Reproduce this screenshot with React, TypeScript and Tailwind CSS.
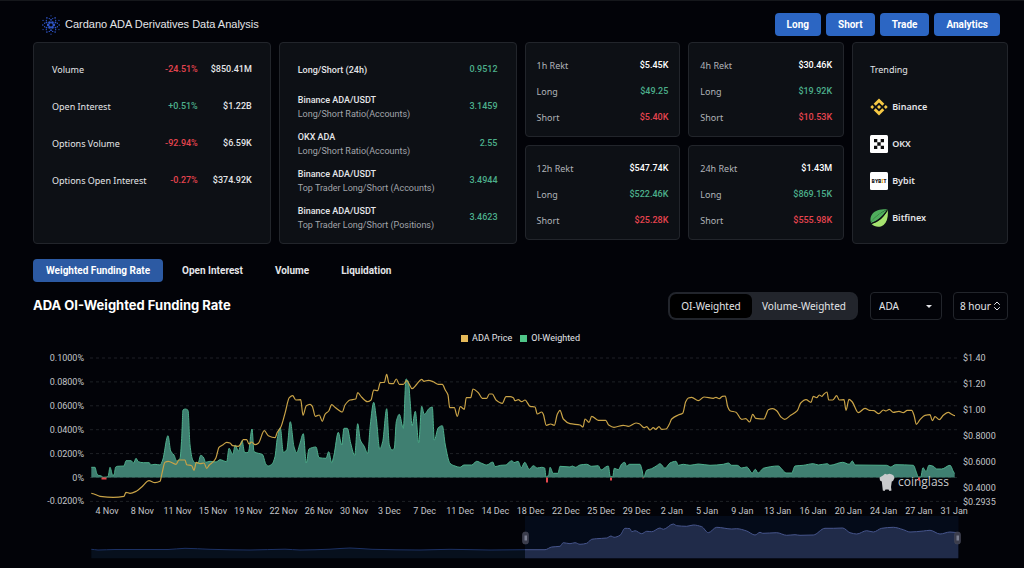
import { ChevronsUpDown } from 'lucide-react';

type Point = [number, number];

const links = ['Long', 'Short', 'Trade', 'Analytics'];

const volumes = [
  { label: 'Volume', change: '-24.51%', value: '$850.41M' },
  { label: 'Open Interest', change: '+0.51%', value: '$1.22B' },
  { label: 'Options Volume', change: '-92.94%', value: '$6.59K' },
  { label: 'Options Open Interest', change: '-0.27%', value: '$374.92K' }
];

const ratios = [
  { label: 'Long/Short (24h)', note: '', value: '0.9512' },
  { label: 'Binance ADA/USDT', note: 'Long/Short Ratio(Accounts)', value: '3.1459' },
  { label: 'OKX ADA', note: 'Long/Short Ratio(Accounts)', value: '2.55' },
  { label: 'Binance ADA/USDT', note: 'Top Trader Long/Short (Accounts)', value: '3.4944' },
  { label: 'Binance ADA/USDT', note: 'Top Trader Long/Short (Positions)', value: '3.4623' }
];

const rekts = [
  { label: '1h Rekt', total: '$5.45K', long: '$49.25', short: '$5.40K' },
  { label: '4h Rekt', total: '$30.46K', long: '$19.92K', short: '$10.53K' },
  { label: '12h Rekt', total: '$547.74K', long: '$522.46K', short: '$25.28K' },
  { label: '24h Rekt', total: '$1.43M', long: '$869.15K', short: '$555.98K' }
];

const tabs = ['Weighted Funding Rate', 'Open Interest', 'Volume', 'Liquidation'];

const rateTicks = ['0.1000%', '0.0800%', '0.0600%', '0.0400%', '0.0200%', '0%', '-0.0200%'];

const priceTicks = [
  { label: '$1.40', y: 358 },
  { label: '$1.20', y: 384 },
  { label: '$1.00', y: 410 },
  { label: '$0.8000', y: 436 },
  { label: '$0.6000', y: 462 },
  { label: '$0.4000', y: 488 },
  { label: '$0.2935', y: 502 }
];

const dateTicks = [
  '4 Nov', '8 Nov', '11 Nov', '15 Nov', '19 Nov', '22 Nov', '26 Nov', '30 Nov',
  '3 Dec', '7 Dec', '11 Dec', '14 Dec', '18 Dec', '22 Dec', '25 Dec', '29 Dec',
  '2 Jan', '5 Jan', '9 Jan', '13 Jan', '16 Jan', '20 Jan', '24 Jan', '27 Jan', '31 Jan'
];

const funding: Point[] = [
  [91.3, 467.3], [95, 467.3], [96.7, 473.3], [98.3, 475.3], [101.3, 476], [103, 477.3], [107, 477], [108.3, 475.7],
  [110, 467.3], [112.7, 475.3], [114, 475], [115.7, 467], [117.3, 466.3], [124, 466], [126, 460.7], [131, 460.7],
  [133.7, 463], [136, 458.3], [138.3, 461.7], [143.3, 462.7], [149.3, 462.7], [150.7, 465], [155, 464.3], [160, 465],
  [162.7, 460], [168, 435.7], [170.7, 451], [174, 455], [176.7, 461], [180, 458.3], [181.7, 438.3], [183, 410],
  [185.3, 409], [188, 410.3], [190, 445], [192.7, 460], [195, 462.7], [198, 463.3], [200.7, 455.3], [203.3, 457],
  [205.7, 462.3], [210, 461.3], [216, 462], [220, 459.7], [226.7, 461.7], [229, 448.3], [232.7, 454.3], [235.3, 445],
  [238.3, 451], [242, 440.7], [244.7, 452.7], [248.3, 452.3], [252, 429], [254, 451.7], [258.3, 453.3], [262.3, 454.3],
  [266, 464.3], [268.3, 466], [272.3, 463.7], [275, 456.7], [277.3, 438.3], [280.3, 427.7], [283.3, 452.3], [286.7, 450],
  [290.3, 421.7], [294, 446.7], [296.7, 452.7], [300, 443.3], [303.3, 433.7], [306.3, 463], [309, 449], [316, 447],
  [319, 457.7], [326, 458.3], [328.7, 451.7], [331.7, 462.7], [334, 455], [338.3, 432.3], [341.7, 445], [344, 428.3],
  [347.3, 428.3], [350.7, 443.3], [354.7, 455.3], [357.7, 423.7], [360.3, 440], [364, 446], [367.7, 453.3], [370.3, 425],
  [373.7, 402.3], [376.3, 418.3], [379.7, 449], [382.7, 441.7], [386.7, 408.7], [389.3, 445], [392, 450], [394.3, 448.3],
  [396.3, 421.7], [399.3, 414.3], [403.3, 428.3], [406, 379], [408.3, 381.7], [410.3, 403.3], [412, 426], [415.3, 411.3],
  [418.7, 442.7], [421.7, 406.3], [424.3, 414.3], [429.3, 408.3], [432.3, 407], [434.3, 440], [438.3, 427.7], [442.3, 425.7],
  [445.3, 445], [450, 463.3], [455, 466], [460, 467.3], [464, 465], [471.7, 465], [476.7, 461.3], [481.7, 463.3],
  [486.7, 465], [492.7, 462], [495, 466.7], [500.7, 465.3], [506, 465], [509, 462.3], [512, 460.7], [514, 462.7],
  [518, 461.3], [521.3, 467.7], [524.7, 462.3], [529.3, 469.3], [533.3, 465.7], [537.3, 468], [541.7, 467.3], [544.7, 468],
  [546, 477], [548.7, 475], [550, 467.3], [553.3, 473.3], [558, 473.3], [560, 466.3], [570, 467], [572.3, 466],
  [575.3, 467.3], [580, 465], [586.7, 464.3], [591.7, 466.3], [598.3, 465.7], [601, 470], [605.7, 467], [608.3, 466],
  [610.3, 476.7], [612.7, 476.7], [614.3, 468.3], [618.3, 469.7], [621.7, 464], [624.7, 462.3], [626.7, 466.3], [629.3, 464.3],
  [640, 464.3], [642, 470], [643.7, 477.3], [646.7, 470.3], [651.7, 468.7], [656.7, 465.7], [660, 463.7], [665, 468.3],
  [670, 463], [676, 461.3], [678.3, 465.3], [683.3, 464.3], [690, 465.3], [698.3, 464], [710, 465.3], [723.3, 464.3],
  [728.3, 463], [731.7, 465.3], [737.3, 465.3], [741.7, 468], [746.7, 467], [752.3, 473], [755.3, 469.3], [758, 473],
  [760.7, 471], [763.3, 468.3], [778.3, 466], [781.7, 469], [786, 473], [791.7, 473], [795, 466], [803.3, 465.3],
  [813.3, 463.7], [818.3, 465], [827.3, 463.7], [830, 465.3], [842.7, 462.3], [849.3, 464.3], [852.3, 461], [855, 465],
  [886.7, 465.3], [890.7, 467], [895.3, 464.7], [913.3, 465.3], [916.7, 473.3], [918.3, 477], [920.7, 477], [923, 467.7],
  [926, 471.7], [929, 465.3], [933.3, 466.3], [936.7, 469], [941.7, 469], [950, 465.3], [954.7, 473.3]
];

// Intervals with a funding rate below zero
const negatives = [
  { x: 104, width: 5, depth: 2 },
  { x: 547, width: 2, depth: 5 },
  { x: 611, width: 2, depth: 3 },
  { x: 643, width: 1, depth: 1 },
  { x: 919, width: 2, depth: 3 }
];

const price: Point[] = [
  [91.3, 493.3], [100, 496.3], [113.3, 497.3], [124, 496.3], [126, 492.3], [130, 493.3], [136.7, 491], [141.7, 487],
  [149, 480.7], [155, 482.7], [160, 481.3], [162, 473.3], [165, 462.3], [168.3, 461.3], [176, 464.3], [179, 460],
  [185, 460], [186.7, 464.7], [191.7, 465.7], [194, 470.3], [196.3, 462.3], [200, 463.7], [204, 463], [206.7, 468.3],
  [209.3, 465], [213.3, 461.7], [216, 457.7], [219, 447.3], [222.7, 445], [226.7, 442.3], [230, 443], [232.7, 445.7],
  [238.3, 446.3], [240.7, 444], [243.3, 439.7], [246.7, 439.7], [249, 444], [251.7, 442], [255, 444.7], [258.3, 443.3],
  [264.3, 430.7], [268.3, 435.7], [275, 437.7], [277.3, 432.3], [281, 426.7], [285, 413.3], [289.3, 397.7], [292.7, 395.7],
  [295.7, 400], [300.7, 399.7], [303, 415.3], [306.3, 405.7], [310, 404.3], [312.3, 406.3], [315.3, 416.3], [319.3, 415],
  [322.3, 421.3], [325, 414.3], [328.7, 411], [331.7, 404.7], [335, 407.3], [342.3, 412], [345, 405], [350, 400],
  [355.7, 399], [357.7, 392.7], [361.7, 397.3], [367.3, 401.7], [371, 400], [373.7, 390], [377.7, 390.7], [380.3, 382.7],
  [384.3, 382.3], [386.7, 374.3], [389, 383.3], [393.3, 383.7], [396.3, 379], [399.3, 384.3], [403.3, 384.3], [406.7, 380.7],
  [409.3, 384.3], [412, 388.7], [416.7, 384.3], [421.7, 379.3], [424, 381.3], [428.3, 380.3], [433.3, 381.7], [438.3, 384.3],
  [442.3, 384.3], [445.3, 390], [448, 395], [449.7, 407.7], [454.3, 407.7], [457.3, 416.3], [460.3, 406.7], [464.3, 409.3],
  [466.3, 397.7], [470.7, 397.7], [473, 389], [478.3, 392.7], [482.3, 398.3], [486.7, 398.3], [489.3, 394], [492.3, 394],
  [496, 400], [502.3, 403.3], [506, 396.7], [510, 396.7], [513.3, 397.7], [515, 400.7], [518.3, 399.7], [521.7, 401.7],
  [525, 400], [530, 406.3], [535, 407], [537.3, 414], [541.7, 412], [543.3, 414.3], [546.3, 425.3], [550.7, 424],
  [554.3, 425.3], [557.3, 414.3], [560, 410.3], [563.3, 419], [570, 423.7], [580, 425], [583, 427], [585, 419],
  [589, 422.3], [591.7, 416.3], [598.3, 420.3], [605.7, 420.3], [608.7, 425], [614, 427.3], [623.3, 425.3], [628.3, 426.3],
  [636, 423], [639.3, 423.7], [644, 427.7], [646.7, 426.7], [650, 430], [653.3, 427.7], [655.7, 429.3], [659, 426.7],
  [661.7, 429.3], [666, 429], [669.3, 424.3], [671.7, 419], [678.3, 415], [682.7, 413.3], [685.7, 401.7], [688.3, 398],
  [691.7, 397.3], [698.3, 400.7], [704, 397], [713.3, 398.3], [716, 397.3], [719.3, 398.7], [722.3, 396.3], [725.3, 396],
  [727.7, 406.7], [730, 410.7], [736, 412.3], [741.7, 419.3], [745.7, 418.7], [749.7, 422], [752.7, 414.3], [755.7, 418.3],
  [764, 419], [766, 415], [768.3, 409.7], [772.7, 408.7], [776.7, 410.7], [780.7, 416.7], [784.7, 419.3], [790.7, 415.3],
  [797.3, 410.7], [800.7, 403], [806, 399.7], [811, 402.3], [813.3, 396.3], [816.7, 397.7], [819.3, 395], [821.7, 396.3],
  [824, 394], [827, 392], [828.7, 400], [832.7, 400], [836.7, 395.7], [839.3, 400], [844, 399.7], [846, 410.3],
  [849, 399.3], [852.3, 402], [858.3, 412.7], [865, 408.3], [869.3, 410.3], [874, 410.7], [878.7, 413.7], [883.3, 410],
  [886, 411], [889.3, 409.3], [893.3, 412.3], [899, 411.3], [903.3, 412.7], [907.3, 410.3], [911.7, 410.3], [914, 415.3],
  [916.3, 424.3], [920, 419.7], [925, 415.3], [930, 414.7], [932.3, 420.7], [935, 416.7], [939.3, 419.7], [943.3, 415.3],
  [948.3, 412.3], [951.7, 414.3], [955, 415.7]
];

const historyOld: Point[] = [
  [91.3, 549.3], [98, 550], [115, 549.5], [168, 549.5], [185, 548.3], [210, 549.3], [250, 550], [285, 549.2],
  [300, 550], [330, 549.2], [350, 548], [372, 549.3], [420, 550], [450, 549.3], [490, 550], [525, 549.7]
];

const history: Point[] = [
  [525, 549.7], [545, 549.7], [551.7, 547], [560, 546.3], [563.3, 542.7], [570, 543.7], [575, 542.7], [580, 544.3],
  [586.7, 543.3], [591.7, 539.3], [596.7, 538.7], [606.7, 538], [611, 536], [614, 537.3], [620, 535.3], [625, 528.3],
  [630, 528.7], [631.7, 531.7], [635, 530.7], [641.7, 533.7], [646.7, 531.3], [651.7, 531.7], [660, 528], [663.3, 529.3],
  [673.3, 524], [676.7, 525.7], [686.7, 526.3], [693.3, 525], [701.7, 526.7], [708.3, 532.7], [716.7, 527.3], [731.7, 529],
  [736.7, 528.7], [746.7, 531], [755, 535], [760, 532.3], [762.7, 533.3], [776.7, 532.7], [786.7, 535.3], [795, 534.7],
  [800, 535.3], [813.3, 535], [825, 528.3], [833.3, 528.3], [842.7, 528], [850, 532.7], [856.7, 534], [866.7, 530.7],
  [873.3, 532], [881.7, 528.3], [893.3, 527.3], [903.3, 529.7], [910, 532], [923.3, 531], [930, 530.3], [940, 534],
  [950, 532], [958.3, 532.7]
];

// Monotone cubic, so the curve never overshoots a point
function curve(points: Point[]) {
  const slope = points.slice(1).map(([x, y], i) => (y - points[i][1]) / (x - points[i][0]));
  const tangent = points.map((_, i) => {
    const a = slope[i - 1] ?? 0;
    const b = slope[i] ?? 0;
    return a * b <= 0 ? 0 : (2 * a * b) / (a + b);
  });
  return points.reduce((d, [x, y], i) => {
    if (i === 0) return `M${x} ${y}`;
    const [px, py] = points[i - 1];
    const h = (x - px) / 3;
    return `${d}C${px + h} ${py + h * tangent[i - 1]} ${x - h} ${y - h * tangent[i]} ${x} ${y}`;
  }, '');
}

function area(points: Point[], base: number) {
  return `${curve(points)}L${points[points.length - 1][0]} ${base}L${points[0][0]} ${base}Z`;
}

function CardanoLogo() {
  const ring = (count: number, radius: number, size: number, offset: number) =>
    Array.from({ length: count }, (_, i) => {
      const angle = ((i + offset) / count) * Math.PI * 2;
      return <circle key={`${radius}-${i}`} cx={10 + radius * Math.sin(angle)} cy={10 - radius * Math.cos(angle)} r={size} />;
    });
  return (
    <svg viewBox="0 0 20 20" className="size-5 shrink-0 fill-[#2f55c8]" aria-hidden="true">
      {ring(6, 2.8, 1.4, 0.5)}
      {ring(6, 5.2, 0.9, 0)}
      {ring(12, 6.6, 0.7, 0.5)}
      {ring(6, 8.2, 0.8, 0.5)}
      {ring(6, 9.2, 0.6, 0)}
    </svg>
  );
}

function BinanceLogo() {
  return (
    <svg viewBox="0 0 18 18" className="size-[18px] fill-[#f6c944]" aria-hidden="true">
      <path d="M9 0.5 14.3 5.8 12.3 7.8 9 4.5 5.7 7.8 3.7 5.8Z" />
      <path d="M9 17.5 14.3 12.2 12.3 10.2 9 13.5 5.7 10.2 3.7 12.2Z" />
      <path d="M9 7 11 9 9 11 7 9Z" />
      <path d="M2.2 7.1 4.1 9 2.2 10.9 0.3 9Z" />
      <path d="M15.8 7.1 17.7 9 15.8 10.9 13.9 9Z" />
    </svg>
  );
}

function OkxLogo() {
  return (
    <svg viewBox="0 0 18 18" className="size-[18px]" aria-hidden="true">
      <rect width="18" height="18" rx="1.5" fill="#fff" />
      <path d="M4 4h3.3v3.3H4zM10.7 4H14v3.3h-3.3zM7.3 7.3h3.4v3.4H7.3zM4 10.7h3.3V14H4zM10.7 10.7H14V14h-3.3z" fill="#0b0b0b" />
    </svg>
  );
}

function BybitLogo() {
  return (
    <svg viewBox="0 0 18 18" className="size-[18px]" aria-hidden="true">
      <rect width="18" height="18" rx="1.5" fill="#fff" />
      <text x="9" y="11" textAnchor="middle" fontSize="5" fontWeight="800" fill="#16171c">
        BYB<tspan fill="#f7a600">I</tspan>T
      </text>
    </svg>
  );
}

function BitfinexLogo() {
  return (
    <svg viewBox="0 0 18 18" className="size-[18px]" aria-hidden="true">
      <path d="M17.6 0.3C11 0 5.2 1.2 2.3 5 0.3 7.5 0.1 10.5 0.8 13.2 4 8.6 10 3.8 17.6 0.3Z" fill="#4fae5c" />
      <path d="M17.8 0.8C18.3 7.5 17.2 13 13.6 15.9 10 18.7 4.8 18.3 1.6 15 9 13.2 14 8 17.8 0.8Z" fill="#a6e36f" />
      <path d="M0.9 13.2C4 8.6 10 3.8 17.5 0.6 13.5 6.8 7.5 12.5 1.3 14.3Z" fill="#4fae5c" />
      <path d="M1.3 14.5C7.5 12.7 13.2 7.6 17.3 1.4" fill="none" stroke="#0d1014" strokeWidth="1.1" />
    </svg>
  );
}

const exchanges = [
  { name: 'Binance', logo: BinanceLogo },
  { name: 'OKX', logo: OkxLogo },
  { name: 'Bybit', logo: BybitLogo },
  { name: 'Bitfinex', logo: BitfinexLogo }
];

const card = 'rounded border border-[#22252b] bg-[#0d1015]';

function FundingChart() {
  return (
    <svg viewBox="33 348 975 216" className="block w-full font-['Roboto',sans-serif] text-[9px]" role="img" aria-label="ADA OI-weighted funding rate">
      {rateTicks.map((label, i) => {
        const y = 358 + i * 23.9;
        return (
          <g key={label}>
            <line x1="90" x2="958" y1={y} y2={y} stroke="#1e2126" strokeWidth="1" strokeDasharray="3 3" />
            <text x="84" y={y + 3} textAnchor="end" fill="#c3c5c9">{label}</text>
          </g>
        );
      })}
      {priceTicks.map((tick) => (
        <text key={tick.label} x="963" y={tick.y + 3} fill="#c3c5c9">{tick.label}</text>
      ))}
      {dateTicks.map((label, i) => (
        <text key={label} x={107 + i * 35.3} y="514" textAnchor="middle" fill="#c3c5c9">{label}</text>
      ))}

      <path d={area(funding, 477.4)} fill="#3f7f71" />
      <path d={curve(funding)} fill="none" stroke="#4eaf8c" strokeWidth="1" />
      <path d={curve(price)} fill="none" stroke="#c9a347" strokeWidth="1.2" />

      {/* Watermark */}
      <g fill="#c9cacc">
        <path d="M883 475.5 885 473.8 887 474.5 889.5 473.8 892 474.5 893.5 475.5 894.5 478 893 481 891.8 481.5 891 487 891.5 490.5 889.5 491 888.5 489.5 885.5 489.5 884.5 491 882.8 490.5 881.8 481.5 880 480.5 879.5 477.5Z" />
        <text x="898" y="486" fontSize="12" fontWeight="500" className="font-['Open_Sans',sans-serif]">coinglass</text>
      </g>
      {negatives.map((n) => (
        <rect key={n.x} x={n.x - n.width / 2} y="477.5" width={n.width} height={n.depth} fill="#e5484d" />
      ))}

      {/* Range slider */}
      <path d={area(historyOld, 558.3)} fill="#07101d" />
      <path d={curve(historyOld)} fill="none" stroke="#1c3164" strokeWidth="1" />
      <rect x="525" y="516" width="433.5" height="42.3" fill="#040b19" />
      <path d={area(history, 558.3)} fill="#202b49" />
      <path d={curve(history)} fill="none" stroke="#46558c" strokeWidth="1" />
      {[525.5, 957.5].map((x) => (
        <g key={x}>
          <rect x={x - 3} y="532" width="6" height="12" rx="2.5" fill="#3b3d4c" stroke="#4a4c5c" strokeWidth="0.5" />
          <rect x={x - 1} y="535.5" width="2.5" height="5" fill="#7a7e90" />
        </g>
      ))}
    </svg>
  );
}

export default function App() {
  return (
    <div className="min-h-screen border-t border-[#15171b] bg-[#020308] pt-3 pr-4 pl-[33px] font-['Roboto',sans-serif] text-[9px] text-[#e4e5e8]">
      <header className="mb-[6px] flex items-center justify-between">
        <div className="flex items-center gap-1 pl-2">
          <CardanoLogo />
          <h1 className="font-['Liberation_Sans',sans-serif] text-[11px]">Cardano ADA Derivatives Data Analysis</h1>
        </div>
        <nav className="flex gap-[5px] pr-2">
          {links.map((link) => (
            <a key={link} href="#" className="rounded bg-[#2c66c3] px-3 text-[10px] leading-[23px] font-bold text-white">
              {link}
            </a>
          ))}
        </nav>
      </header>

      {/* Summary cards */}
      <section className="grid grid-cols-[238fr_238fr_320fr_156fr] items-start gap-2">
        <div className={`${card} self-stretch py-2`}>
          <table className="w-full">
            <tbody>
              {volumes.map((row) => (
                <tr key={row.label} className="h-[37px]">
                  <th scope="row" className="pl-[18px] text-left font-['Noto_Sans',sans-serif] font-normal">{row.label}</th>
                  <td className={`text-right font-medium ${row.change.startsWith('-') ? 'text-[#e5444f]' : 'text-[#4caf8b]'}`}>{row.change}</td>
                  <td className="w-[72px] pr-[18px] text-right font-medium">{row.value}</td>
                </tr>
              ))}
            </tbody>
          </table>
        </div>

        <div className={`${card} px-[18px] pt-2 pb-[7px]`}>
          {ratios.map((row, index) => (
            <div key={index} className="flex h-[37px] items-center justify-between">
              <div>
                <p className="leading-[14px] font-medium">{row.label}</p>
                {row.note && <p className="leading-[14px] text-[#a2a5ab]">{row.note}</p>}
              </div>
              <p className="font-medium text-[#4caf8b]">{row.value}</p>
            </div>
          ))}
        </div>

        <div className="grid grid-cols-2 gap-2">
          {rekts.map((rekt) => (
            <dl key={rekt.label} className={`${card} px-[11px] pt-[10px] pb-[5px]`}>
              <div className="flex h-[26px] items-center justify-between">
                <dt className="font-['Noto_Sans',sans-serif] text-[#b0b3b8]">{rekt.label}</dt>
                <dd className="font-medium text-white">{rekt.total}</dd>
              </div>
              <div className="flex h-[26px] items-center justify-between">
                <dt className="font-['Noto_Sans',sans-serif] text-[#b0b3b8]">Long</dt>
                <dd className="font-medium text-[#4caf8b]">{rekt.long}</dd>
              </div>
              <div className="flex h-[26px] items-center justify-between">
                <dt className="font-['Noto_Sans',sans-serif] text-[#b0b3b8]">Short</dt>
                <dd className="font-medium text-[#e5444f]">{rekt.short}</dd>
              </div>
            </dl>
          ))}
        </div>

        <div className={`${card} px-[17px] pt-2 pb-[7px] font-['Noto_Sans',sans-serif]`}>
          <h2 className="leading-[37px]">Trending</h2>
          {exchanges.map((exchange) => {
            const Logo = exchange.logo;
            return (
              <a key={exchange.name} href="#" className="flex h-[37px] items-center gap-1 font-semibold">
                <Logo />
                {exchange.name}
              </a>
            );
          })}
        </div>
      </section>

      <nav className="mt-[15px] flex gap-[6px] text-[10px] font-bold">
        {tabs.map((tab, index) => (
          <button key={tab} type="button" className={`rounded px-[13px] leading-[23px] ${index === 0 ? 'bg-[#2c5aa3] text-white' : ''}`}>
            {tab}
          </button>
        ))}
      </nav>

      <div className="mt-[10px] flex items-center justify-between">
        <h2 className="font-['Inter',sans-serif] text-[13px] font-bold text-white">ADA OI-Weighted Funding Rate</h2>
        <div className="flex items-center font-['Noto_Sans',sans-serif] text-[10px]">
          <div className="mr-3 flex h-7 rounded-lg border-2 border-[#22252c] bg-[#22252c]">
            <button type="button" aria-pressed="true" className="w-[82px] rounded-md bg-black">OI-Weighted</button>
            <button type="button" aria-pressed="false" className="w-[104px]">Volume-Weighted</button>
          </div>
          <div className="relative mr-[11px]">
            <select aria-label="Coin" className="h-7 w-[72px] appearance-none rounded border border-[#22252b] bg-transparent pl-2">
              <option>ADA</option>
            </select>
            <svg viewBox="0 0 6 3" className="pointer-events-none absolute top-[13px] right-[10px] h-[3px] w-[6px] fill-[#e4e5e8]" aria-hidden="true">
              <path d="M0 0h6L3 3z" />
            </svg>
          </div>
          <div className="relative">
            <select aria-label="Interval" className="h-7 w-[55px] appearance-none rounded border border-[#22252b] bg-transparent pl-[6px]">
              <option>8 hour</option>
            </select>
            <ChevronsUpDown size={12} className="pointer-events-none absolute top-2 right-[5px]" />
          </div>
        </div>
      </div>

      <div className="mt-[11px] mb-[3px] flex justify-center gap-2 leading-[14px]">
        <span className="flex items-center gap-1"><i className="size-[7px] bg-[#e5b959]" />ADA Price</span>
        <span className="flex items-center gap-1"><i className="size-[7px] bg-[#4fc588]" />OI-Weighted</span>
      </div>

      <FundingChart />
    </div>
  );
}
